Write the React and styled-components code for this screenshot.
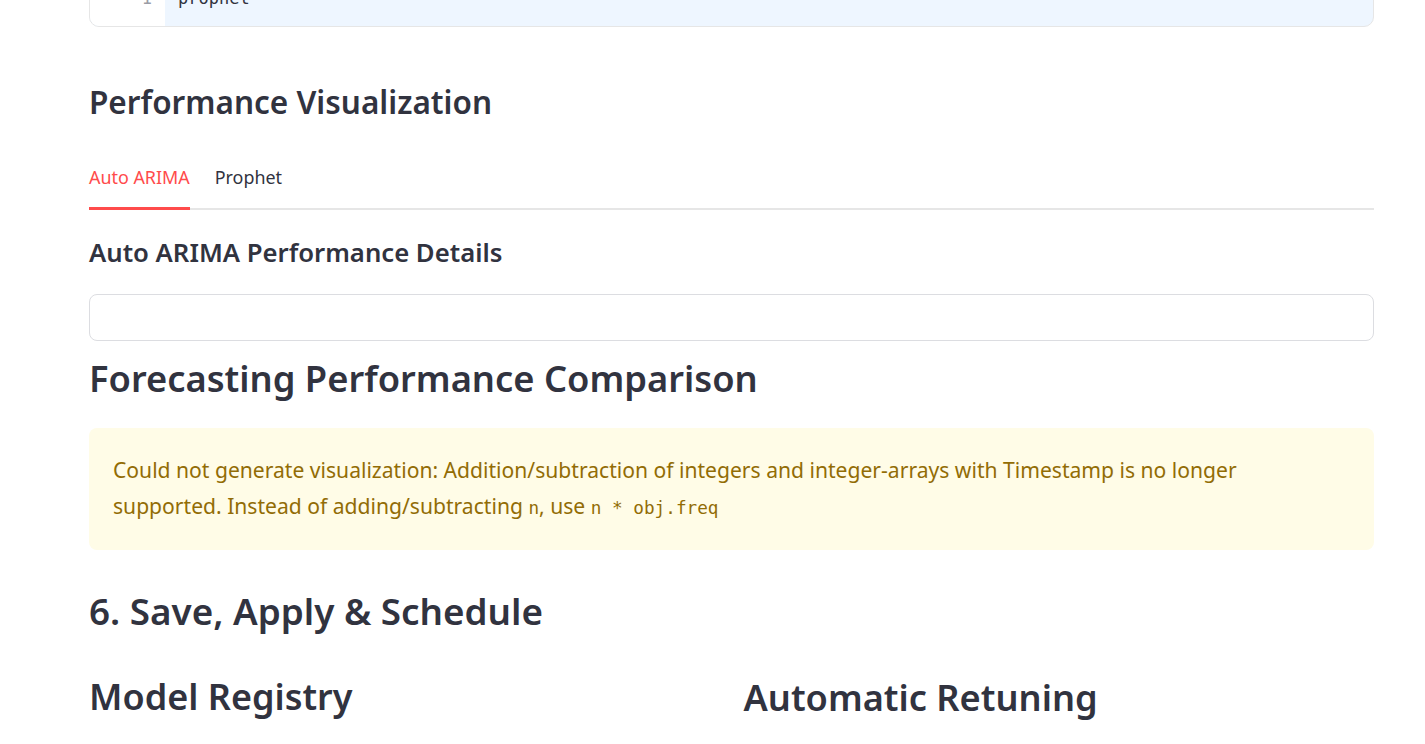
import React from "react";
import styled, { createGlobalStyle } from "styled-components";

const Global = createGlobalStyle`
  html, body { margin: 0; padding: 0; background: #ffffff; }
  body { font-family: "Noto Sans", "Open Sans", sans-serif; color: #31333f; overflow: hidden; }
`;

const Main = styled.main`
  width: 1285px;
  margin-left: 89px;
  display: flex;
  flex-direction: column;
`;

const CodeBlock = styled.div`
  display: flex;
  margin-top: -30px;
  border: 1px solid #e6e6e6;
  border-radius: 10px;
  overflow: hidden;
  background: #eef6ff;
  font-family: "DejaVu Sans Mono", monospace;
  font-size: 17px;
  line-height: 24px;
`;

const Gutter = styled.div`
  width: 75px;
  box-sizing: border-box;
  padding: 15px 13px 16px 0;
  text-align: right;
  background: #ffffff;
  color: #9a9ca6;
`;

const CodeText = styled.div`
  padding: 15px 13px 16px 13px;
  color: #31333f;
`;

const Heading = styled.h2`
  margin: ${(p) => p.$mt}px 0 0 0;
  font-size: ${(p) => p.$size}px;
  line-height: ${(p) => p.$lh}px;
  font-weight: 600;
  color: #31333f;
  white-space: nowrap;
`;

const TabList = styled.div`
  margin-top: 43px;
  display: flex;
  gap: 25px;
  border-bottom: 2px solid #e6e6e6;
`;

const Tab = styled.div`
  font-size: 17.9px;
  line-height: 24px;
  padding-bottom: 18px;
  margin-bottom: -2px;
  border-bottom: 3px solid ${(p) => (p.$active ? "#ff4b4b" : "transparent")};
  color: ${(p) => (p.$active ? "#ff4b4b" : "#31333f")};
`;

const EmptyBox = styled.div`
  margin-top: 25px;
  height: 45px;
  border: 1px solid #dcdde1;
  border-radius: 8px;
`;

const Warning = styled.div`
  margin-top: 26px;
  background: #fffce7;
  border-radius: 8px;
  padding: 24px;
  color: #926c05;
  font-size: 21.1px;
  line-height: 36px;
  white-space: nowrap;
`;

const InlineCode = styled.code`
  font-family: "DejaVu Sans Mono", monospace;
  font-size: 17.7px;
  color: #926c05;
`;

const Columns = styled.div`
  margin-top: 38px;
  display: grid;
  grid-template-columns: 1fr 1fr;
  gap: 24px;
`;

export default function App() {
  return (
    <>
      <Global />
      <Main>
        <CodeBlock>
          <Gutter>1</Gutter>
          <CodeText>prophet</CodeText>
        </CodeBlock>

        <Heading as="h3" $mt={55} $size={31.5} $lh={40}>
          Performance Visualization
        </Heading>

        <TabList>
          <Tab $active>Auto ARIMA</Tab>
          <Tab>Prophet</Tab>
        </TabList>

        <Heading as="h4" $mt={27} $size={25.7} $lh={32}>
          Auto ARIMA Performance Details
        </Heading>

        <EmptyBox />

        <Heading $mt={13} $size={36.3} $lh={48}>
          Forecasting Performance Comparison
        </Heading>

        <Warning>
          Could not generate visualization: Addition/subtraction of integers and integer-arrays with Timestamp is no longer
          <br />
          supported. Instead of adding/subtracting <InlineCode>n</InlineCode>, use <InlineCode>n * obj.freq</InlineCode>
        </Warning>

        <Heading $mt={37} $size={36.8} $lh={48}>
          6. Save, Apply &amp; Schedule
        </Heading>

        <Columns>
          <Heading $mt={0} $size={36} $lh={48}>
            Model Registry
          </Heading>
          <Heading $mt={0} $size={36.2} $lh={48}>
            Automatic Retuning
          </Heading>
        </Columns>
      </Main>
    </>
  );
}
